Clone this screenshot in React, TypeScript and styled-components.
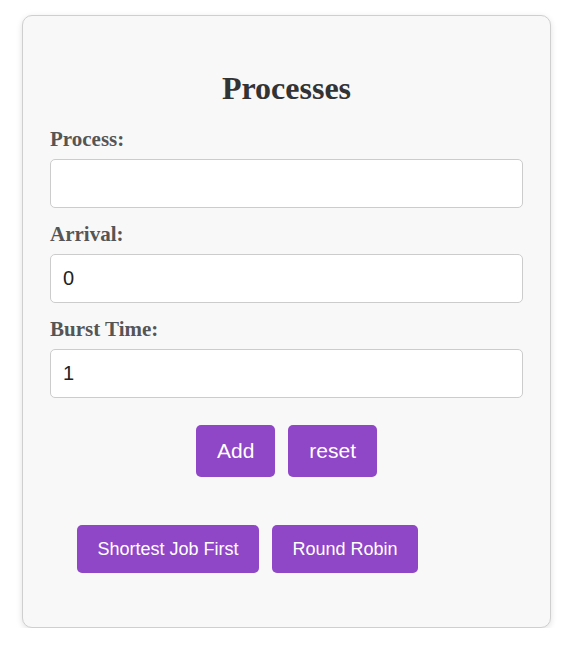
import React from "react";
import styled, { createGlobalStyle } from "styled-components";

const Global = createGlobalStyle`
  html, body { margin: 0; padding: 0; background: #ffffff; }
  body { font-family: "Liberation Serif", "Times New Roman", serif; }
  * { box-sizing: border-box; }
`;

const Page = styled.div`
  padding: 15px 0 0 22px;
`;

const Card = styled.div`
  width: 529px;
  height: 613px;
  background: #f8f8f8;
  border: 1px solid #cfcfcf;
  border-radius: 10px;
  box-shadow: 0 2px 6px rgba(0, 0, 0, 0.12);
  padding: 54px 27px 0 27px;
`;

const Title = styled.h1`
  margin: 0 0 20px 0;
  font-family: "Liberation Serif", "Times New Roman", serif;
  font-size: 32px;
  line-height: 37px;
  font-weight: bold;
  color: #333333;
  text-align: center;
`;

const Label = styled.label`
  display: block;
  font-family: "Liberation Serif", "Times New Roman", serif;
  font-size: 21px;
  line-height: 24px;
  font-weight: bold;
  color: #555555;
  margin-bottom: 8px;
`;

const Input = styled.input`
  display: block;
  width: 100%;
  height: 49px;
  padding: 0 12px;
  margin-bottom: 14px;
  border: 1px solid #cccccc;
  border-radius: 5px;
  background: #ffffff;
  font-family: "Liberation Sans", Arial, sans-serif;
  font-size: 20px;
  color: #222222;
  outline: none;
`;

const ButtonRow = styled.div`
  display: flex;
  justify-content: center;
  gap: 13px;
  margin-top: 27px;
`;

const AlgoRow = styled.div`
  display: flex;
  gap: 13px;
  margin-top: 48px;
  padding-left: 27px;
`;

const Button = styled.button<{ $size?: "lg" | "md" }>`
  border: none;
  border-radius: 5px;
  background: #8f46c7;
  color: #ffffff;
  font-family: "Liberation Sans", Arial, sans-serif;
  font-size: ${(p) => (p.$size === "md" ? "18px" : "21px")};
  height: ${(p) => (p.$size === "md" ? "48px" : "52px")};
  padding: ${(p) => (p.$size === "md" ? "0 20.5px" : "0 21px")};
  cursor: pointer;
`;

export default function App() {
  return (
    <>
      <Global />
      <Page>
        <Card>
          <Title>Processes</Title>
          <Label htmlFor="process">Process:</Label>
          <Input id="process" type="text" defaultValue="" />
          <Label htmlFor="arrival">Arrival:</Label>
          <Input id="arrival" type="number" defaultValue="0" />
          <Label htmlFor="burst">Burst Time:</Label>
          <Input id="burst" type="number" defaultValue="1" />
          <ButtonRow>
            <Button $size="lg">Add</Button>
            <Button $size="lg">reset</Button>
          </ButtonRow>
          <AlgoRow>
            <Button $size="md">Shortest Job First</Button>
            <Button $size="md">Round Robin</Button>
          </AlgoRow>
        </Card>
      </Page>
    </>
  );
}
